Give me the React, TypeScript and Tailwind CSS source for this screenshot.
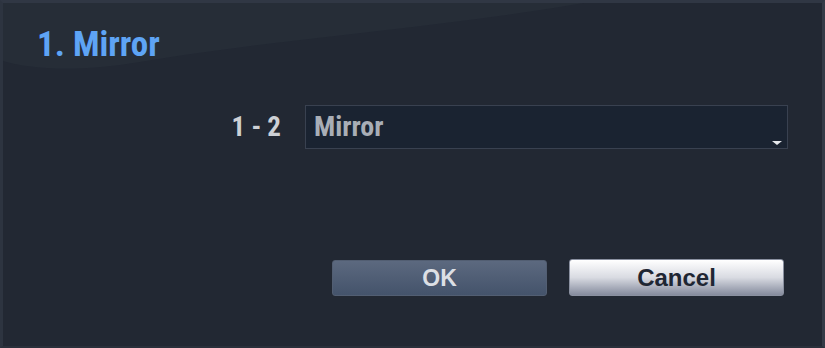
export default function App() {
  return (
    <div className="relative h-[348px] w-[825px] overflow-hidden bg-[#222833] font-['Liberation_Sans_Narrow','Roboto_Condensed','Liberation_Sans',sans-serif]">
      {/* soft gloss in the header corner */}
      <svg className="pointer-events-none absolute left-0 top-0" width="825" height="80" viewBox="0 0 825 80">
        <path d="M0 0 H600 C460 26 280 38 140 62 C80 72 30 70 0 60 Z" fill="#2a313c" opacity="0.5" />
      </svg>
      <div className="relative flex h-full flex-col border-l-[3px] border-r-[3px] border-t-[3px] border-b-[2px] border-l-[#2d3440] border-r-[#343b47] border-t-[#303744] border-b-[#2a303b]">
        <div className="pl-[34px] pt-[22px] text-[35px] font-bold leading-[40px] text-[#5ea4f5]">1. Mirror</div>
        <div className="mt-[40px] flex items-center">
          <div className="w-[302px] pr-[24px] text-right text-[27px] font-bold text-[#cdd0d5]">1 - 2</div>
          <div className="relative flex h-[44px] w-[483px] items-center border border-[#394150] bg-[#1a2331] pl-[8px] text-[28px] font-bold text-[#a9aeb6]">
            Mirror
            <span className="absolute bottom-[3px] right-[5px] h-0 w-0 border-l-[5px] border-r-[5px] border-t-[4px] border-l-transparent border-r-transparent border-t-[#e6e8ec]" />
          </div>
        </div>
        <div className="mt-[111px] flex gap-[22px] pl-[329px]">
          <button className="flex h-[36px] w-[215px] items-center justify-center rounded-[3px] border border-[#525e72] bg-gradient-to-b from-[#5c697f] to-[#44536b] font-['Liberation_Sans',sans-serif] text-[23px] font-bold text-[#dcdfe4]">
            OK
          </button>
          <button className="-mt-px flex h-[37px] w-[215px] items-center justify-center rounded-[3px] border border-[#8a90a0] bg-gradient-to-b from-[#ffffff] via-[#d9dbe2] to-[#858b9d] font-['Liberation_Sans',sans-serif] text-[24px] font-bold text-[#1f2633]">
            Cancel
          </button>
        </div>
      </div>
    </div>
  );
}
